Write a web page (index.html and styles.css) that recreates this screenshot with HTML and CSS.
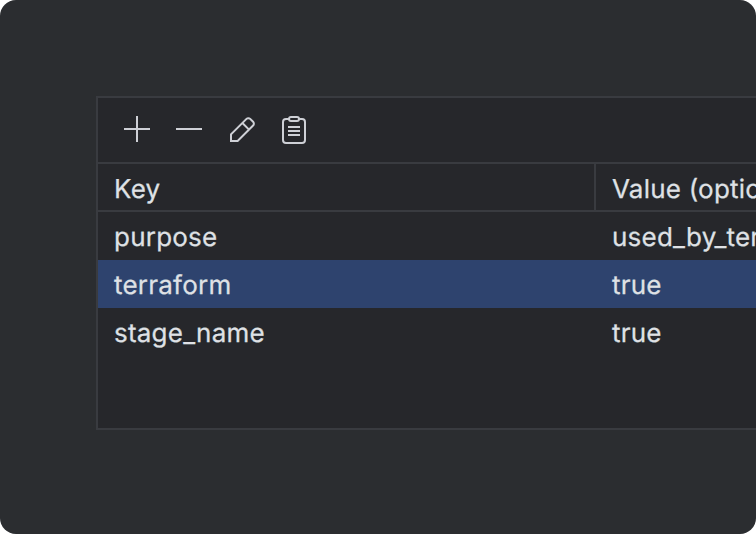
FILE: index.html
```html
<!DOCTYPE html>
<html lang="en">
<head>
<meta charset="utf-8">
<title>Tags</title>
<link rel="stylesheet" href="styles.css">
</head>
<body>
<main class="window">
  <section class="panel">
    <div class="toolbar">
      <svg class="icon" viewBox="0 0 32 32"><path d="M16 3v26M3 16h26"/></svg>
      <svg class="icon" viewBox="0 0 32 32"><path d="M3 16h26"/></svg>
      <svg class="icon" viewBox="0 0 32 32"><path d="M6 28v-6.6L21.5 5.9a2.6 2.6 0 0 1 3.7 0l2.9 2.9a2.6 2.6 0 0 1 0 3.7L12.6 28zM17.4 10l6.6 6.6"/></svg>
      <svg class="icon" viewBox="0 0 32 32"><path d="M12 6H9a3 3 0 0 0-3 3v18a3 3 0 0 0 3 3h16a3 3 0 0 0 3-3V9a3 3 0 0 0-3-3h-3M14 4h6a2 2 0 0 1 0 4h-6a2 2 0 0 1 0-4zM11 14h12M11 18h12M11 22h12"/></svg>
    </div>
    <div class="row head"><span class="cell">Key</span><span class="cell">Value (optional)</span></div>
    <div class="row"><span class="cell">purpose</span><span class="cell">used_by_terraform</span></div>
    <div class="row selected"><span class="cell">terraform</span><span class="cell">true</span></div>
    <div class="row"><span class="cell">stage_name</span><span class="cell">true</span></div>
  </section>
</main>
</body>
</html>
```
FILE: styles.css
```css
* { box-sizing: border-box; }
body { margin: 0; background: #fff; font-family: Inter, sans-serif; font-size: 26px; letter-spacing: 0.22px; text-rendering: geometricPrecision; color: #dfe1e5; }
.window { width: 756px; height: 534px; padding: 96px 0 0 96px; background: #2b2d30; border-radius: 16px; overflow: hidden; }
.panel { width: 800px; height: 334px; background: #26272b; border: 2px solid #393b40; }
.toolbar { display: flex; gap: 20px; height: 64px; padding: 15px 0 0 23px; }
.icon { width: 32px; height: 32px; fill: none; stroke: #ced0d6; stroke-width: 2; }
.row { display: grid; grid-template-columns: 496px 1fr; height: 48px; line-height: 52px; white-space: nowrap; }
.cell { padding-left: 16px; -webkit-text-stroke: 0.25px #dfe1e5; }
.cell + .cell { border-left: 2px solid transparent; }
.head { height: 50px; border-top: 2px solid #393b40; border-bottom: 2px solid #393b40; }
.head .cell { height: 46px; }
.head .cell + .cell { border-left-color: #393b40; }
.selected { background: #2e436e; }
```
